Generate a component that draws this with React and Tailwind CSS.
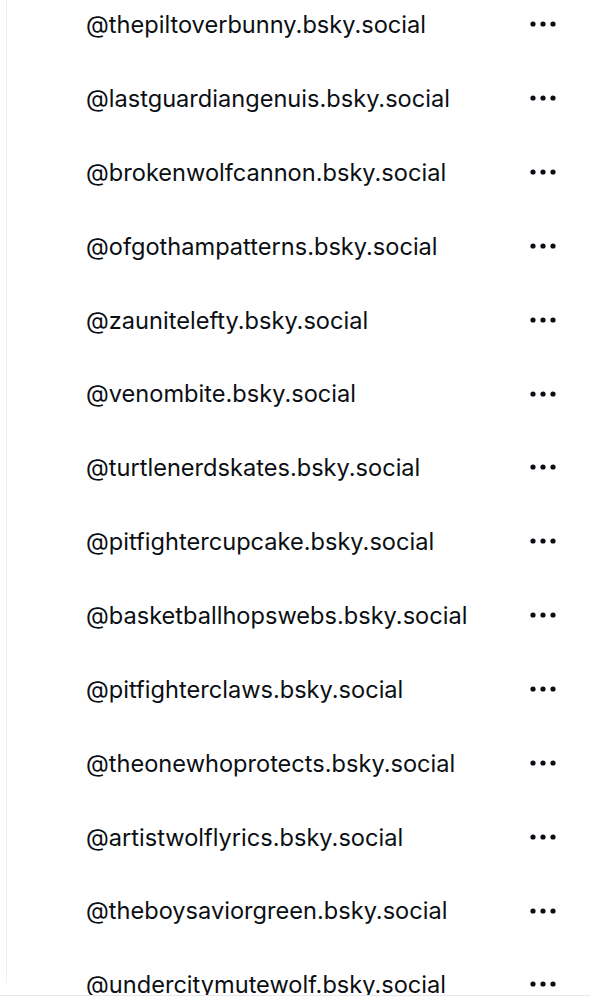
const handles = [
  'thepiltoverbunny',
  'lastguardiangenuis',
  'brokenwolfcannon',
  'ofgothampatterns',
  'zaunitelefty',
  'venombite',
  'turtlenerdskates',
  'pitfightercupcake',
  'basketballhopswebs',
  'pitfighterclaws',
  'theonewhoprotects',
  'artistwolflyrics',
  'theboysaviorgreen',
  'undercitymutewolf',
];

function Dots() {
  return (
    <svg width="26" height="6" viewBox="0 0 26 6" className="text-[#0b0f14]">
      <circle cx="3" cy="3" r="2.6" fill="currentColor" />
      <circle cx="13" cy="3" r="2.6" fill="currentColor" />
      <circle cx="23" cy="3" r="2.6" fill="currentColor" />
    </svg>
  );
}

export default function App() {
  return (
    <div className="h-[996px] overflow-hidden bg-white border-b border-[#e6e8eb]" style={{ fontFamily: 'Inter, "Noto Sans", sans-serif' }}>
      <div className="ml-[6px] h-full border-l border-[#eef0f2]">
        <ul className="-mt-[12px]">
          {handles.map((h) => (
            <li key={h} className="flex h-[73.85px] items-center justify-between pl-[79px] pr-[34px]">
              <span className="text-[23.6px] text-[#0b0f14]">@{h}.bsky.social</span>
              <button aria-label="More" className="flex items-center -mt-[1px]">
                <Dots />
              </button>
            </li>
          ))}
        </ul>
      </div>
    </div>
  );
}
